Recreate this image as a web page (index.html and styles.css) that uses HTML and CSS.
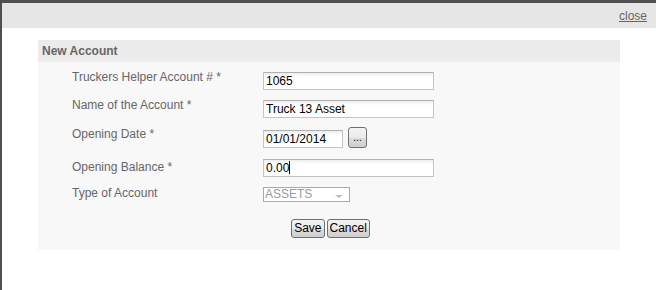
FILE: index.html
```html
<!DOCTYPE html>
<html>
<head>
<meta charset="utf-8">
<link rel="stylesheet" href="styles.css">
</head>
<body>
<div class="frame">
  <div class="topbar"><a class="close" href="#">close</a></div>
  <div class="content">
    <div class="panel">
      <div class="panel-header">New Account</div>
      <div class="panel-body">
        <div class="row">
          <div class="label">Truckers Helper Account # *</div>
          <div class="control"><input class="field wide" type="text" value="1065"></div>
        </div>
        <div class="row">
          <div class="label">Name of the Account *</div>
          <div class="control"><input class="field wide" type="text" value="Truck 13 Asset"></div>
        </div>
        <div class="row row-date">
          <div class="label">Opening Date *</div>
          <div class="control date-control">
            <input class="field date" type="text" value="01/01/2014">
            <button class="pick" type="button">...</button>
          </div>
        </div>
        <div class="row row-balance">
          <div class="label">Opening Balance *</div>
          <div class="control"><div class="field wide focus">0.00<span class="caret"></span></div></div>
        </div>
        <div class="row row-type">
          <div class="label">Type of Account</div>
          <div class="control">
            <div class="select">ASSETS<span class="arrow"></span></div>
          </div>
        </div>
        <div class="actions">
          <button class="btn" type="button">Save</button>
          <button class="btn" type="button">Cancel</button>
        </div>
      </div>
    </div>
  </div>
</div>
</body>
</html>
```

FILE: styles.css
```css
* { box-sizing: border-box; }
html, body { margin: 0; padding: 0; background: #fff; }
body {
  font-family: "Liberation Sans", Arial, sans-serif;
  font-size: 12px;
  color: #666;
  width: 656px;
  height: 290px;
  overflow: hidden;
}
.frame {
  height: 290px;
  border-top: 3px solid #4f4f4f;
  border-left: 2px solid #4f4f4f;
}
.topbar {
  height: 25px;
  background: #e6e6e6;
  display: flex;
  justify-content: flex-end;
  align-items: flex-start;
  padding: 7px 9px 0 0;
}
.close {
  color: #666;
  font-size: 12px;
  line-height: 13px;
  text-decoration: underline;
}
.content {
  padding: 12px 0 0 36px;
}
.panel {
  width: 582px;
}
.panel-header {
  height: 22px;
  line-height: 22px;
  background: #ececec;
  padding-left: 4px;
  font-weight: bold;
  color: #666;
}
.panel-body {
  background: #f8f8f8;
  height: 188px;
  padding-top: 5px;
}
.row {
  display: flex;
  align-items: flex-start;
  height: 28px;
}
.label {
  width: 225px;
  padding-left: 34px;
  padding-top: 3px;
  line-height: 14px;
  color: #666;
}
.control {
  padding-top: 5px;
  display: flex;
  align-items: flex-start;
}
.field {
  height: 18px;
  border: 1px solid #c4c4c4;
  border-top-color: #b0b0b0;
  background: linear-gradient(#ececec, #fff 4px);
  font-family: "Liberation Sans", Arial, sans-serif;
  font-size: 12px;
  color: #000;
  padding: 0 2px;
  line-height: 16px;
  margin: 0;
  outline: none;
}
.wide { width: 171px; }
.date { width: 80px; margin-top: 3px; }
.row-date { height: 31px; }
.row-date .control { padding-top: 0; padding-top: 4px; }
.row-date .label { padding-top: 4px; }
.pick {
  margin-left: 5px;
  width: 19px;
  height: 21px;
  border: 1px solid #707070;
  border-radius: 3px;
  background: linear-gradient(#f2f2f2 0, #ebebeb 50%, #dddddd 51%, #cfcfcf 100%);
  font-family: "Liberation Sans", Arial, sans-serif;
  font-size: 10px;
  line-height: 12px;
  padding: 0;
  color: #000;
}
.row-balance .label { padding-top: 6px; }
.focus { position: relative; }
.caret {
  display: inline-block;
  width: 1px;
  height: 13px;
  background: #000;
  vertical-align: -2px;
}
.row-type .label { padding-top: 4px; }
.select {
  position: relative;
  width: 87px;
  height: 15px;
  border: 1px solid #a9a9a9;
  background: #fff;
  color: #9a9aa6;
  font-size: 12px;
  line-height: 13px;
  padding-left: 1px;
}
.arrow {
  position: absolute;
  right: 6px;
  top: 7px;
  width: 0;
  height: 0;
  border-left: 4px solid transparent;
  border-right: 4px solid transparent;
  border-top: 3px solid #bdbdbd;
}
.actions {
  display: flex;
  justify-content: center;
  gap: 2px;
  margin-top: 9px;
  padding-left: 3px;
}
.btn {
  height: 19px;
  border: 1px solid #707070;
  border-radius: 3px;
  background: linear-gradient(#f2f2f2 0, #ebebeb 50%, #dddddd 51%, #cfcfcf 100%);
  font-family: "Liberation Sans", Arial, sans-serif;
  font-size: 12px;
  color: #000;
  padding: 0 2px;
  line-height: 15px;
  margin: 0;
}
```
